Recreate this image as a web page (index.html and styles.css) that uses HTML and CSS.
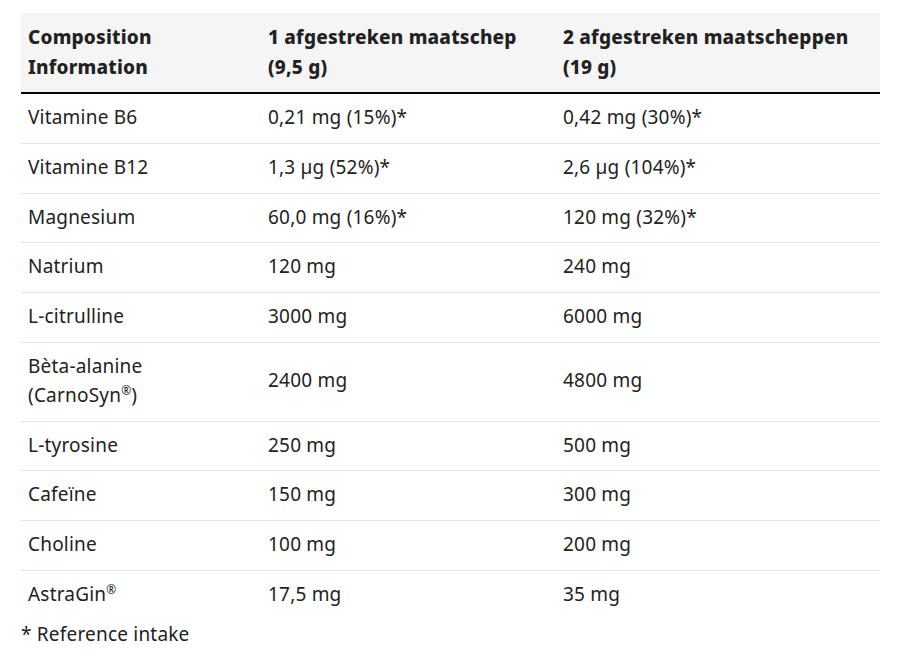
FILE: index.html
```html
<!DOCTYPE html>
<html lang="nl">
<head>
<meta charset="utf-8">
<title>Composition</title>
<link rel="stylesheet" href="styles.css">
</head>
<body>
<div class="wrap">
  <table class="comp">
    <colgroup>
      <col class="c1"><col class="c2"><col class="c3">
    </colgroup>
    <thead>
      <tr>
        <th>Composition<br>Information</th>
        <th>1 afgestreken maatschep<br>(9,5 g)</th>
        <th>2 afgestreken maatscheppen<br>(19 g)</th>
      </tr>
    </thead>
    <tbody>
      <tr><td>Vitamine B6</td><td>0,21 mg (15%)*</td><td>0,42 mg (30%)*</td></tr>
      <tr><td>Vitamine B12</td><td>1,3 µg (52%)*</td><td>2,6 µg (104%)*</td></tr>
      <tr><td>Magnesium</td><td>60,0 mg (16%)*</td><td>120 mg (32%)*</td></tr>
      <tr><td>Natrium</td><td>120 mg</td><td>240 mg</td></tr>
      <tr><td>L-citrulline</td><td>3000 mg</td><td>6000 mg</td></tr>
      <tr><td>Bèta-alanine<br>(CarnoSyn<sup>®</sup>)</td><td>2400 mg</td><td>4800 mg</td></tr>
      <tr><td>L-tyrosine</td><td>250 mg</td><td>500 mg</td></tr>
      <tr><td>Cafeïne</td><td>150 mg</td><td>300 mg</td></tr>
      <tr><td>Choline</td><td>100 mg</td><td>200 mg</td></tr>
      <tr class="last"><td>AstraGin<sup>®</sup></td><td>17,5 mg</td><td>35 mg</td></tr>
    </tbody>
  </table>
  <p class="note">* Reference intake</p>
</div>
</body>
</html>
```
FILE: styles.css
```css
html, body {
  margin: 0;
  padding: 0;
  background: #fff;
}
body {
  font-family: "Noto Sans", sans-serif;
  font-size: 19px;
  letter-spacing: 0.2px;
  line-height: 28.8px;
  color: #222;
}
.wrap {
  padding: 13px 22px 0 21px;
}
.comp {
  width: 859px;
  border-collapse: collapse;
  table-layout: fixed;
}
.c1 { width: 240px; }
.c2 { width: 295px; }
.c3 { width: 324px; }
.comp th {
  background: #f5f5f5;
  text-align: left;
  font-weight: 800;
  line-height: 30px;
  padding: 9px 7px 10px;
  border-bottom: 2px solid #000;
  vertical-align: middle;
}
.comp td {
  padding: 9px 7px 11px;
  border-bottom: 1px solid #e4e4e4;
  vertical-align: middle;
}
.comp tr.last td {
  border-bottom: none;
}
sup {
  font-size: 12px;
  line-height: 0;
  vertical-align: 7px;
}
.note {
  margin: 0;
}
```
